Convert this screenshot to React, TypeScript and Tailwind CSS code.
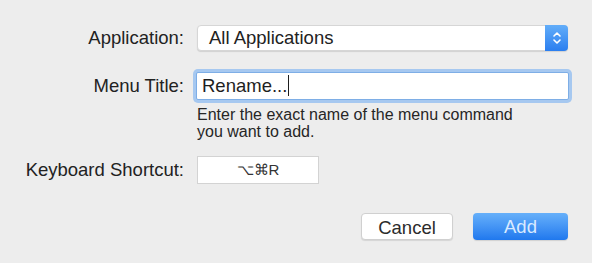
import React from 'react'

// Sheet for adding an app shortcut (macOS Keyboard preferences style)

function Chevrons() {
  return (
    <svg width="10" height="16" viewBox="0 0 10 16" fill="none">
      <path d="M2 6 L5 3 L8 6" stroke="white" strokeWidth="1.6" strokeLinecap="round" strokeLinejoin="round" />
      <path d="M2 10 L5 13 L8 10" stroke="white" strokeWidth="1.6" strokeLinecap="round" strokeLinejoin="round" />
    </svg>
  )
}

function Label({ children }: { children: React.ReactNode }) {
  return <div className="w-[185px] shrink-0 pr-[1px] text-right text-[18.5px] text-[#222]">{children}</div>
}

export default function App() {
  return (
    <div
      className="h-[263px] w-[592px] overflow-hidden bg-[#ededed] pt-[24px]"
      style={{ fontFamily: '"Liberation Sans", Arial, sans-serif' }}
    >
      {/* Application */}
      <div className="flex items-center gap-[12px]">
        <Label>Application:</Label>
        <div className="flex h-[26px] w-[371px] items-stretch rounded-[4px] border border-[#d6d6d6] bg-white shadow-[0_1px_1px_rgba(0,0,0,0.12)]">
          <div className="flex flex-1 items-center pl-[11px] text-[18.5px] text-[#222]">All Applications</div>
          <div className="-my-px -mr-px flex w-[23px] items-center justify-center rounded-r-[4px] bg-gradient-to-b from-[#62adf9] to-[#2a7eef]">
            <Chevrons />
          </div>
        </div>
      </div>

      {/* Menu title */}
      <div className="mt-[20px] flex items-center gap-[11px]">
        <Label>Menu Title:</Label>
        <div className="flex h-[28px] w-[373px] items-center rounded-[2px] border border-[#7eaee6] bg-white pl-[5px] text-[18.5px] text-[#1e1e1e] shadow-[0_0_0_3px_#a6c8f0]">
          <span>Rename...</span>
          <span className="ml-[1px] h-[21px] w-px bg-[#1e1e1e]" />
        </div>
      </div>

      {/* Help text */}
      <div className="ml-[197px] mt-[6px] text-[16px] leading-[17px] text-[#262626]">
        Enter the exact name of the menu command
        <br />
        you want to add.
      </div>

      {/* Shortcut */}
      <div className="mt-[16px] flex items-center gap-[12px]">
        <Label>Keyboard Shortcut:</Label>
        <div className="flex h-[28px] w-[122px] items-center justify-center border border-[#d3d3d3] bg-white text-[15px] text-[#333]">
          ⌥⌘R
        </div>
      </div>

      {/* Buttons */}
      <div className="mt-[29px] flex justify-end gap-[20px] pr-[24px]">
        <button className="h-[27px] w-[92px] rounded-[4px] border border-[#d0d0d0] bg-white text-[18.5px] text-[#2b2b2b] shadow-[0_1px_1px_rgba(0,0,0,0.1)]">
          Cancel
        </button>
        <button className="h-[27px] w-[95px] rounded-[4px] bg-gradient-to-b from-[#66b0fa] to-[#1f78ee] text-[18.5px] text-[#d9eaff] shadow-[0_1px_1px_rgba(0,0,0,0.12)]">
          Add
        </button>
      </div>
    </div>
  )
}
